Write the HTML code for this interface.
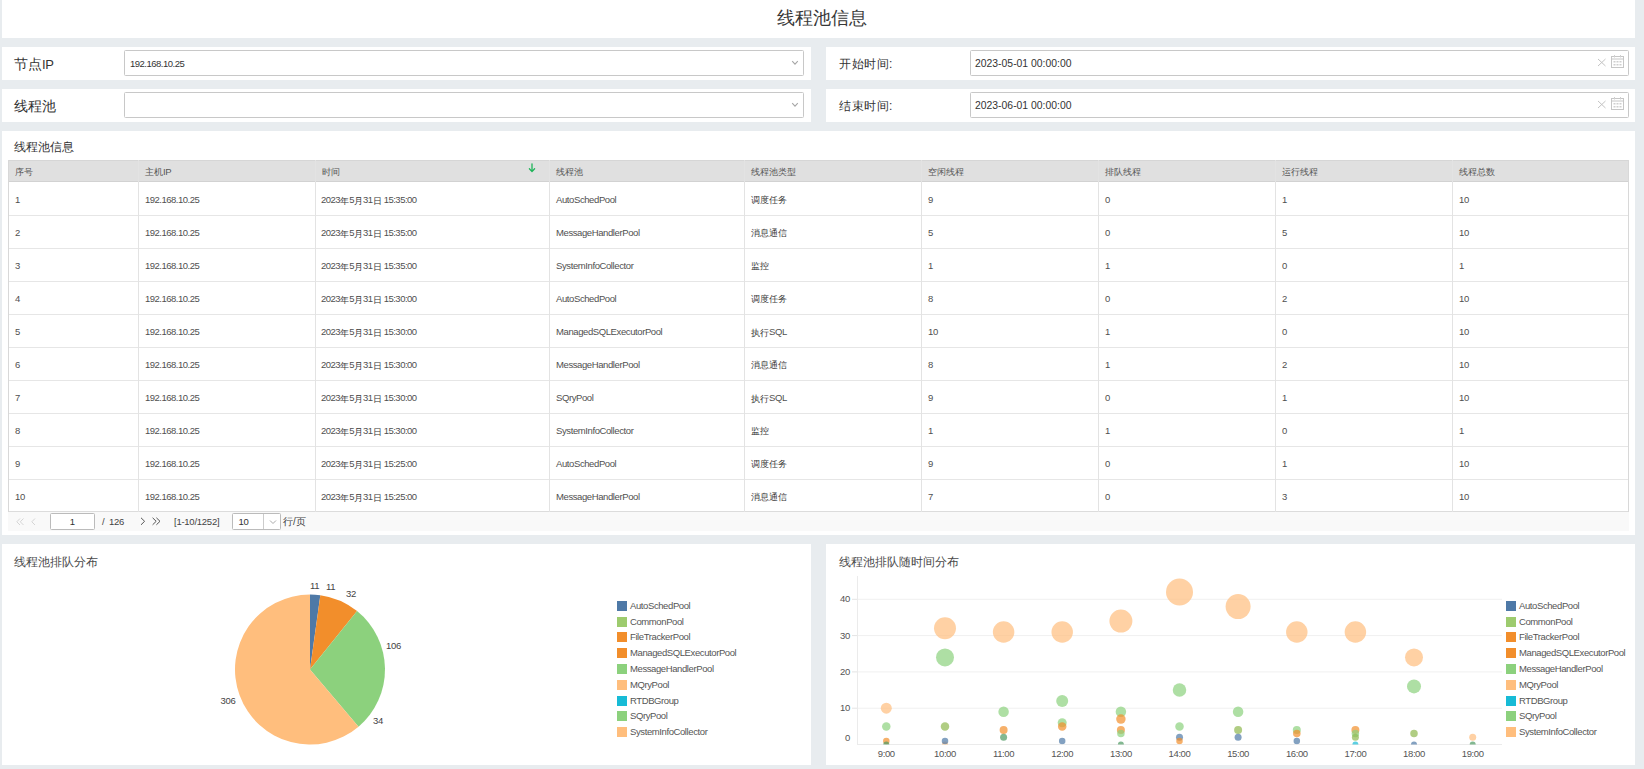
<!DOCTYPE html>
<html><head><meta charset="utf-8"><title>线程池信息</title>
<style>
*{box-sizing:border-box}
html,body{margin:0;padding:0}
body{width:1644px;height:769px;background:#e8ecef;position:relative;overflow:hidden;font-family:"Liberation Sans",sans-serif;color:#333}
.a{position:absolute;white-space:nowrap}
.p{position:absolute;background:#fff}
.lbl{position:absolute;font-size:14px;line-height:16px;color:#333;white-space:nowrap}
.inp{position:absolute;border:1px solid #c8c8c8;border-radius:1.5px;background:#fff}
.inp span.v{position:absolute;left:4px;top:0;line-height:24px;font-size:10px;color:#333;white-space:nowrap}
.th,.td{position:absolute;white-space:nowrap;padding-left:7px;font-size:9px;color:#505050}
.th{top:162px;height:20px;line-height:20px;color:#555}
.td{height:33px;line-height:35px}
.hl{position:absolute;height:1px}
.vl{position:absolute;width:1px}
.leg{position:absolute;font-size:10px;color:#555;white-space:nowrap;line-height:12px}
</style></head><body>

<div class="p" style="left:2px;top:0;width:1633px;height:38px"></div>
<div class="a" style="left:0;top:7px;width:1644px;text-align:center;font-size:18px;line-height:22px;color:#383838">线程池信息</div>
<div class="p" style="left:2px;top:47px;width:809px;height:33px"></div>
<div class="p" style="left:826px;top:47px;width:809px;height:33px"></div>
<div class="lbl" style="left:14px;top:56px">节点<span style="font-size:13px;letter-spacing:-0.3px">IP</span></div>
<div class="lbl" style="left:839px;top:56px;font-size:12px;letter-spacing:0.5px">开始时间:</div>
<div class="inp" style="left:124px;top:50px;width:680px;height:26px"><span class="v" style="left:5px;top:1px;font-size:9.5px;letter-spacing:-0.5px">192.168.10.25</span><svg class="a" style="left:666px;top:9px" width="8" height="6" viewBox="0 0 8 6"><path d="M1.2 1.2 L4 4.1 L6.8 1.2" fill="none" stroke="#a6a6a6" stroke-width="1.1"/></svg></div>
<div class="inp" style="left:970px;top:50px;width:659px;height:26px"><span class="v" style="font-size:10.4px;letter-spacing:0px;top:1px">2023-05-01 00:00:00</span><svg class="a" style="left:626px;top:7px" width="10" height="9" viewBox="0 0 10 9"><path d="M1 1 L8.5 8 M8.5 1 L1 8" stroke="#c4c4c4" stroke-width="1" fill="none"/></svg><svg class="a" style="left:640px;top:4px" width="14" height="14" viewBox="0 0 14 14"><rect x="0.5" y="1.5" width="12" height="11" fill="none" stroke="#c6c6c6"/><line x1="0.5" x2="12.5" y1="4" y2="4" stroke="#c6c6c6" stroke-width="1"/><line x1="3.5" x2="3.5" y1="0" y2="2.5" stroke="#d0d0d0"/><line x1="9.5" x2="9.5" y1="0" y2="2.5" stroke="#d0d0d0"/><rect x="2.5" y="6" width="2" height="1.5" fill="#cfcfcf"/><rect x="2.5" y="9" width="2" height="1.5" fill="#cfcfcf"/><rect x="5.5" y="6" width="2" height="1.5" fill="#cfcfcf"/><rect x="5.5" y="9" width="2" height="1.5" fill="#cfcfcf"/><rect x="8.5" y="6" width="2" height="1.5" fill="#cfcfcf"/><rect x="8.5" y="9" width="2" height="1.5" fill="#cfcfcf"/></svg></div>
<div class="p" style="left:2px;top:89px;width:809px;height:33px"></div>
<div class="p" style="left:826px;top:89px;width:809px;height:33px"></div>
<div class="lbl" style="left:14px;top:98px">线程池</div>
<div class="lbl" style="left:839px;top:98px;font-size:12px;letter-spacing:0.5px">结束时间:</div>
<div class="inp" style="left:124px;top:92px;width:680px;height:26px"><span class="v" style="left:5px;top:1px;font-size:9.5px;letter-spacing:-0.5px"></span><svg class="a" style="left:666px;top:9px" width="8" height="6" viewBox="0 0 8 6"><path d="M1.2 1.2 L4 4.1 L6.8 1.2" fill="none" stroke="#a6a6a6" stroke-width="1.1"/></svg></div>
<div class="inp" style="left:970px;top:92px;width:659px;height:26px"><span class="v" style="font-size:10.4px;letter-spacing:0px;top:1px">2023-06-01 00:00:00</span><svg class="a" style="left:626px;top:7px" width="10" height="9" viewBox="0 0 10 9"><path d="M1 1 L8.5 8 M8.5 1 L1 8" stroke="#c4c4c4" stroke-width="1" fill="none"/></svg><svg class="a" style="left:640px;top:4px" width="14" height="14" viewBox="0 0 14 14"><rect x="0.5" y="1.5" width="12" height="11" fill="none" stroke="#c6c6c6"/><line x1="0.5" x2="12.5" y1="4" y2="4" stroke="#c6c6c6" stroke-width="1"/><line x1="3.5" x2="3.5" y1="0" y2="2.5" stroke="#d0d0d0"/><line x1="9.5" x2="9.5" y1="0" y2="2.5" stroke="#d0d0d0"/><rect x="2.5" y="6" width="2" height="1.5" fill="#cfcfcf"/><rect x="2.5" y="9" width="2" height="1.5" fill="#cfcfcf"/><rect x="5.5" y="6" width="2" height="1.5" fill="#cfcfcf"/><rect x="5.5" y="9" width="2" height="1.5" fill="#cfcfcf"/><rect x="8.5" y="6" width="2" height="1.5" fill="#cfcfcf"/><rect x="8.5" y="9" width="2" height="1.5" fill="#cfcfcf"/></svg></div>
<div class="p" style="left:2px;top:131px;width:1633px;height:404px"></div>
<div class="a" style="left:14px;top:140px;font-size:12px;line-height:15px;color:#333">线程池信息</div>
<div class="a" style="left:8px;top:160px;width:1621px;height:22px;background:#e0e0e0"></div>
<div class="hl" style="left:8px;top:160px;width:1621px;background:#d6d6d6"></div>
<div class="hl" style="left:8px;top:181px;width:1621px;background:#d2d2d2"></div>
<div class="hl" style="left:8px;top:215px;width:1621px;background:#e6e6e6"></div>
<div class="hl" style="left:8px;top:248px;width:1621px;background:#e6e6e6"></div>
<div class="hl" style="left:8px;top:281px;width:1621px;background:#e6e6e6"></div>
<div class="hl" style="left:8px;top:314px;width:1621px;background:#e6e6e6"></div>
<div class="hl" style="left:8px;top:347px;width:1621px;background:#e6e6e6"></div>
<div class="hl" style="left:8px;top:380px;width:1621px;background:#e6e6e6"></div>
<div class="hl" style="left:8px;top:413px;width:1621px;background:#e6e6e6"></div>
<div class="hl" style="left:8px;top:446px;width:1621px;background:#e6e6e6"></div>
<div class="hl" style="left:8px;top:479px;width:1621px;background:#e6e6e6"></div>
<div class="hl" style="left:8px;top:511px;width:1621px;background:#dcdcdc"></div>
<div class="vl" style="left:8px;top:160px;height:352px;background:#d8d8d8"></div>
<div class="vl" style="left:138px;top:160px;height:352px;background:#e3e3e3"></div>
<div class="vl" style="left:315px;top:160px;height:352px;background:#e3e3e3"></div>
<div class="vl" style="left:549px;top:160px;height:352px;background:#e3e3e3"></div>
<div class="vl" style="left:744px;top:160px;height:352px;background:#e3e3e3"></div>
<div class="vl" style="left:921px;top:160px;height:352px;background:#e3e3e3"></div>
<div class="vl" style="left:1098px;top:160px;height:352px;background:#e3e3e3"></div>
<div class="vl" style="left:1275px;top:160px;height:352px;background:#e3e3e3"></div>
<div class="vl" style="left:1452px;top:160px;height:352px;background:#e3e3e3"></div>
<div class="vl" style="left:1628px;top:160px;height:352px;background:#d8d8d8"></div>
<div class="th" style="left:8px;width:130px">序号</div>
<div class="th" style="left:138px;width:177px">主机<span style="font-size:9.5px;letter-spacing:-0.3px">IP</span></div>
<div class="th" style="left:315px;width:234px">时间</div>
<div class="th" style="left:549px;width:195px">线程池</div>
<div class="th" style="left:744px;width:177px">线程池类型</div>
<div class="th" style="left:921px;width:177px">空闲线程</div>
<div class="th" style="left:1098px;width:177px">排队线程</div>
<div class="th" style="left:1275px;width:177px">运行线程</div>
<div class="th" style="left:1452px;width:176px">线程总数</div>
<svg class="a" style="left:527.5px;top:163px" width="8" height="10" viewBox="0 0 8 10"><path d="M4 0.8 V8.5 M1.4 5.8 L4 8.6 L6.6 5.8" stroke="#1fb45a" stroke-width="1.3" fill="none" stroke-linecap="round"/></svg>
<div class="td" style="left:8px;top:182px;width:130px"><span style="font-size:9.5px;letter-spacing:-0.4px">1</span></div>
<div class="td" style="left:138px;top:182px;width:177px"><span style="font-size:9.5px;letter-spacing:-0.5px">192.168.10.25</span></div>
<div class="td" style="padding-left:6px;left:315px;top:182px;width:234px"><span style="font-size:9.5px;letter-spacing:-0.5px">2023</span><span style="position:relative;top:1px;color:#383838">年</span><span style="font-size:9.5px;letter-spacing:-0.5px">5</span><span style="position:relative;top:1px;color:#383838">月</span><span style="font-size:9.5px;letter-spacing:-0.5px">31</span><span style="position:relative;top:1px;color:#383838">日</span><span style="font-size:9.5px;letter-spacing:-0.5px"> 15:35:00</span></div>
<div class="td" style="left:549px;top:182px;width:195px"><span style="font-size:9.5px;letter-spacing:-0.4px">AutoSchedPool</span></div>
<div class="td" style="left:744px;top:182px;width:177px"><span style="position:relative;top:1px;color:#383838">调度任务</span></div>
<div class="td" style="left:921px;top:182px;width:177px"><span style="font-size:9.5px;letter-spacing:-0.4px">9</span></div>
<div class="td" style="left:1098px;top:182px;width:177px"><span style="font-size:9.5px;letter-spacing:-0.4px">0</span></div>
<div class="td" style="left:1275px;top:182px;width:177px"><span style="font-size:9.5px;letter-spacing:-0.4px">1</span></div>
<div class="td" style="left:1452px;top:182px;width:176px"><span style="font-size:9.5px;letter-spacing:-0.4px">10</span></div>
<div class="td" style="left:8px;top:215px;width:130px"><span style="font-size:9.5px;letter-spacing:-0.4px">2</span></div>
<div class="td" style="left:138px;top:215px;width:177px"><span style="font-size:9.5px;letter-spacing:-0.5px">192.168.10.25</span></div>
<div class="td" style="padding-left:6px;left:315px;top:215px;width:234px"><span style="font-size:9.5px;letter-spacing:-0.5px">2023</span><span style="position:relative;top:1px;color:#383838">年</span><span style="font-size:9.5px;letter-spacing:-0.5px">5</span><span style="position:relative;top:1px;color:#383838">月</span><span style="font-size:9.5px;letter-spacing:-0.5px">31</span><span style="position:relative;top:1px;color:#383838">日</span><span style="font-size:9.5px;letter-spacing:-0.5px"> 15:35:00</span></div>
<div class="td" style="left:549px;top:215px;width:195px"><span style="font-size:9.5px;letter-spacing:-0.4px">MessageHandlerPool</span></div>
<div class="td" style="left:744px;top:215px;width:177px"><span style="position:relative;top:1px;color:#383838">消息通信</span></div>
<div class="td" style="left:921px;top:215px;width:177px"><span style="font-size:9.5px;letter-spacing:-0.4px">5</span></div>
<div class="td" style="left:1098px;top:215px;width:177px"><span style="font-size:9.5px;letter-spacing:-0.4px">0</span></div>
<div class="td" style="left:1275px;top:215px;width:177px"><span style="font-size:9.5px;letter-spacing:-0.4px">5</span></div>
<div class="td" style="left:1452px;top:215px;width:176px"><span style="font-size:9.5px;letter-spacing:-0.4px">10</span></div>
<div class="td" style="left:8px;top:248px;width:130px"><span style="font-size:9.5px;letter-spacing:-0.4px">3</span></div>
<div class="td" style="left:138px;top:248px;width:177px"><span style="font-size:9.5px;letter-spacing:-0.5px">192.168.10.25</span></div>
<div class="td" style="padding-left:6px;left:315px;top:248px;width:234px"><span style="font-size:9.5px;letter-spacing:-0.5px">2023</span><span style="position:relative;top:1px;color:#383838">年</span><span style="font-size:9.5px;letter-spacing:-0.5px">5</span><span style="position:relative;top:1px;color:#383838">月</span><span style="font-size:9.5px;letter-spacing:-0.5px">31</span><span style="position:relative;top:1px;color:#383838">日</span><span style="font-size:9.5px;letter-spacing:-0.5px"> 15:35:00</span></div>
<div class="td" style="left:549px;top:248px;width:195px"><span style="font-size:9.5px;letter-spacing:-0.4px">SystemInfoCollector</span></div>
<div class="td" style="left:744px;top:248px;width:177px"><span style="position:relative;top:1px;color:#383838">监控</span></div>
<div class="td" style="left:921px;top:248px;width:177px"><span style="font-size:9.5px;letter-spacing:-0.4px">1</span></div>
<div class="td" style="left:1098px;top:248px;width:177px"><span style="font-size:9.5px;letter-spacing:-0.4px">1</span></div>
<div class="td" style="left:1275px;top:248px;width:177px"><span style="font-size:9.5px;letter-spacing:-0.4px">0</span></div>
<div class="td" style="left:1452px;top:248px;width:176px"><span style="font-size:9.5px;letter-spacing:-0.4px">1</span></div>
<div class="td" style="left:8px;top:281px;width:130px"><span style="font-size:9.5px;letter-spacing:-0.4px">4</span></div>
<div class="td" style="left:138px;top:281px;width:177px"><span style="font-size:9.5px;letter-spacing:-0.5px">192.168.10.25</span></div>
<div class="td" style="padding-left:6px;left:315px;top:281px;width:234px"><span style="font-size:9.5px;letter-spacing:-0.5px">2023</span><span style="position:relative;top:1px;color:#383838">年</span><span style="font-size:9.5px;letter-spacing:-0.5px">5</span><span style="position:relative;top:1px;color:#383838">月</span><span style="font-size:9.5px;letter-spacing:-0.5px">31</span><span style="position:relative;top:1px;color:#383838">日</span><span style="font-size:9.5px;letter-spacing:-0.5px"> 15:30:00</span></div>
<div class="td" style="left:549px;top:281px;width:195px"><span style="font-size:9.5px;letter-spacing:-0.4px">AutoSchedPool</span></div>
<div class="td" style="left:744px;top:281px;width:177px"><span style="position:relative;top:1px;color:#383838">调度任务</span></div>
<div class="td" style="left:921px;top:281px;width:177px"><span style="font-size:9.5px;letter-spacing:-0.4px">8</span></div>
<div class="td" style="left:1098px;top:281px;width:177px"><span style="font-size:9.5px;letter-spacing:-0.4px">0</span></div>
<div class="td" style="left:1275px;top:281px;width:177px"><span style="font-size:9.5px;letter-spacing:-0.4px">2</span></div>
<div class="td" style="left:1452px;top:281px;width:176px"><span style="font-size:9.5px;letter-spacing:-0.4px">10</span></div>
<div class="td" style="left:8px;top:314px;width:130px"><span style="font-size:9.5px;letter-spacing:-0.4px">5</span></div>
<div class="td" style="left:138px;top:314px;width:177px"><span style="font-size:9.5px;letter-spacing:-0.5px">192.168.10.25</span></div>
<div class="td" style="padding-left:6px;left:315px;top:314px;width:234px"><span style="font-size:9.5px;letter-spacing:-0.5px">2023</span><span style="position:relative;top:1px;color:#383838">年</span><span style="font-size:9.5px;letter-spacing:-0.5px">5</span><span style="position:relative;top:1px;color:#383838">月</span><span style="font-size:9.5px;letter-spacing:-0.5px">31</span><span style="position:relative;top:1px;color:#383838">日</span><span style="font-size:9.5px;letter-spacing:-0.5px"> 15:30:00</span></div>
<div class="td" style="left:549px;top:314px;width:195px"><span style="font-size:9.5px;letter-spacing:-0.4px">ManagedSQLExecutorPool</span></div>
<div class="td" style="left:744px;top:314px;width:177px"><span style="position:relative;top:1px;color:#383838">执行</span><span style="font-size:9.5px;letter-spacing:-0.4px">SQL</span></div>
<div class="td" style="left:921px;top:314px;width:177px"><span style="font-size:9.5px;letter-spacing:-0.4px">10</span></div>
<div class="td" style="left:1098px;top:314px;width:177px"><span style="font-size:9.5px;letter-spacing:-0.4px">1</span></div>
<div class="td" style="left:1275px;top:314px;width:177px"><span style="font-size:9.5px;letter-spacing:-0.4px">0</span></div>
<div class="td" style="left:1452px;top:314px;width:176px"><span style="font-size:9.5px;letter-spacing:-0.4px">10</span></div>
<div class="td" style="left:8px;top:347px;width:130px"><span style="font-size:9.5px;letter-spacing:-0.4px">6</span></div>
<div class="td" style="left:138px;top:347px;width:177px"><span style="font-size:9.5px;letter-spacing:-0.5px">192.168.10.25</span></div>
<div class="td" style="padding-left:6px;left:315px;top:347px;width:234px"><span style="font-size:9.5px;letter-spacing:-0.5px">2023</span><span style="position:relative;top:1px;color:#383838">年</span><span style="font-size:9.5px;letter-spacing:-0.5px">5</span><span style="position:relative;top:1px;color:#383838">月</span><span style="font-size:9.5px;letter-spacing:-0.5px">31</span><span style="position:relative;top:1px;color:#383838">日</span><span style="font-size:9.5px;letter-spacing:-0.5px"> 15:30:00</span></div>
<div class="td" style="left:549px;top:347px;width:195px"><span style="font-size:9.5px;letter-spacing:-0.4px">MessageHandlerPool</span></div>
<div class="td" style="left:744px;top:347px;width:177px"><span style="position:relative;top:1px;color:#383838">消息通信</span></div>
<div class="td" style="left:921px;top:347px;width:177px"><span style="font-size:9.5px;letter-spacing:-0.4px">8</span></div>
<div class="td" style="left:1098px;top:347px;width:177px"><span style="font-size:9.5px;letter-spacing:-0.4px">1</span></div>
<div class="td" style="left:1275px;top:347px;width:177px"><span style="font-size:9.5px;letter-spacing:-0.4px">2</span></div>
<div class="td" style="left:1452px;top:347px;width:176px"><span style="font-size:9.5px;letter-spacing:-0.4px">10</span></div>
<div class="td" style="left:8px;top:380px;width:130px"><span style="font-size:9.5px;letter-spacing:-0.4px">7</span></div>
<div class="td" style="left:138px;top:380px;width:177px"><span style="font-size:9.5px;letter-spacing:-0.5px">192.168.10.25</span></div>
<div class="td" style="padding-left:6px;left:315px;top:380px;width:234px"><span style="font-size:9.5px;letter-spacing:-0.5px">2023</span><span style="position:relative;top:1px;color:#383838">年</span><span style="font-size:9.5px;letter-spacing:-0.5px">5</span><span style="position:relative;top:1px;color:#383838">月</span><span style="font-size:9.5px;letter-spacing:-0.5px">31</span><span style="position:relative;top:1px;color:#383838">日</span><span style="font-size:9.5px;letter-spacing:-0.5px"> 15:30:00</span></div>
<div class="td" style="left:549px;top:380px;width:195px"><span style="font-size:9.5px;letter-spacing:-0.4px">SQryPool</span></div>
<div class="td" style="left:744px;top:380px;width:177px"><span style="position:relative;top:1px;color:#383838">执行</span><span style="font-size:9.5px;letter-spacing:-0.4px">SQL</span></div>
<div class="td" style="left:921px;top:380px;width:177px"><span style="font-size:9.5px;letter-spacing:-0.4px">9</span></div>
<div class="td" style="left:1098px;top:380px;width:177px"><span style="font-size:9.5px;letter-spacing:-0.4px">0</span></div>
<div class="td" style="left:1275px;top:380px;width:177px"><span style="font-size:9.5px;letter-spacing:-0.4px">1</span></div>
<div class="td" style="left:1452px;top:380px;width:176px"><span style="font-size:9.5px;letter-spacing:-0.4px">10</span></div>
<div class="td" style="left:8px;top:413px;width:130px"><span style="font-size:9.5px;letter-spacing:-0.4px">8</span></div>
<div class="td" style="left:138px;top:413px;width:177px"><span style="font-size:9.5px;letter-spacing:-0.5px">192.168.10.25</span></div>
<div class="td" style="padding-left:6px;left:315px;top:413px;width:234px"><span style="font-size:9.5px;letter-spacing:-0.5px">2023</span><span style="position:relative;top:1px;color:#383838">年</span><span style="font-size:9.5px;letter-spacing:-0.5px">5</span><span style="position:relative;top:1px;color:#383838">月</span><span style="font-size:9.5px;letter-spacing:-0.5px">31</span><span style="position:relative;top:1px;color:#383838">日</span><span style="font-size:9.5px;letter-spacing:-0.5px"> 15:30:00</span></div>
<div class="td" style="left:549px;top:413px;width:195px"><span style="font-size:9.5px;letter-spacing:-0.4px">SystemInfoCollector</span></div>
<div class="td" style="left:744px;top:413px;width:177px"><span style="position:relative;top:1px;color:#383838">监控</span></div>
<div class="td" style="left:921px;top:413px;width:177px"><span style="font-size:9.5px;letter-spacing:-0.4px">1</span></div>
<div class="td" style="left:1098px;top:413px;width:177px"><span style="font-size:9.5px;letter-spacing:-0.4px">1</span></div>
<div class="td" style="left:1275px;top:413px;width:177px"><span style="font-size:9.5px;letter-spacing:-0.4px">0</span></div>
<div class="td" style="left:1452px;top:413px;width:176px"><span style="font-size:9.5px;letter-spacing:-0.4px">1</span></div>
<div class="td" style="left:8px;top:446px;width:130px"><span style="font-size:9.5px;letter-spacing:-0.4px">9</span></div>
<div class="td" style="left:138px;top:446px;width:177px"><span style="font-size:9.5px;letter-spacing:-0.5px">192.168.10.25</span></div>
<div class="td" style="padding-left:6px;left:315px;top:446px;width:234px"><span style="font-size:9.5px;letter-spacing:-0.5px">2023</span><span style="position:relative;top:1px;color:#383838">年</span><span style="font-size:9.5px;letter-spacing:-0.5px">5</span><span style="position:relative;top:1px;color:#383838">月</span><span style="font-size:9.5px;letter-spacing:-0.5px">31</span><span style="position:relative;top:1px;color:#383838">日</span><span style="font-size:9.5px;letter-spacing:-0.5px"> 15:25:00</span></div>
<div class="td" style="left:549px;top:446px;width:195px"><span style="font-size:9.5px;letter-spacing:-0.4px">AutoSchedPool</span></div>
<div class="td" style="left:744px;top:446px;width:177px"><span style="position:relative;top:1px;color:#383838">调度任务</span></div>
<div class="td" style="left:921px;top:446px;width:177px"><span style="font-size:9.5px;letter-spacing:-0.4px">9</span></div>
<div class="td" style="left:1098px;top:446px;width:177px"><span style="font-size:9.5px;letter-spacing:-0.4px">0</span></div>
<div class="td" style="left:1275px;top:446px;width:177px"><span style="font-size:9.5px;letter-spacing:-0.4px">1</span></div>
<div class="td" style="left:1452px;top:446px;width:176px"><span style="font-size:9.5px;letter-spacing:-0.4px">10</span></div>
<div class="td" style="left:8px;top:479px;width:130px"><span style="font-size:9.5px;letter-spacing:-0.4px">10</span></div>
<div class="td" style="left:138px;top:479px;width:177px"><span style="font-size:9.5px;letter-spacing:-0.5px">192.168.10.25</span></div>
<div class="td" style="padding-left:6px;left:315px;top:479px;width:234px"><span style="font-size:9.5px;letter-spacing:-0.5px">2023</span><span style="position:relative;top:1px;color:#383838">年</span><span style="font-size:9.5px;letter-spacing:-0.5px">5</span><span style="position:relative;top:1px;color:#383838">月</span><span style="font-size:9.5px;letter-spacing:-0.5px">31</span><span style="position:relative;top:1px;color:#383838">日</span><span style="font-size:9.5px;letter-spacing:-0.5px"> 15:25:00</span></div>
<div class="td" style="left:549px;top:479px;width:195px"><span style="font-size:9.5px;letter-spacing:-0.4px">MessageHandlerPool</span></div>
<div class="td" style="left:744px;top:479px;width:177px"><span style="position:relative;top:1px;color:#383838">消息通信</span></div>
<div class="td" style="left:921px;top:479px;width:177px"><span style="font-size:9.5px;letter-spacing:-0.4px">7</span></div>
<div class="td" style="left:1098px;top:479px;width:177px"><span style="font-size:9.5px;letter-spacing:-0.4px">0</span></div>
<div class="td" style="left:1275px;top:479px;width:177px"><span style="font-size:9.5px;letter-spacing:-0.4px">3</span></div>
<div class="td" style="left:1452px;top:479px;width:176px"><span style="font-size:9.5px;letter-spacing:-0.4px">10</span></div>
<div class="a" style="left:8px;top:512px;width:1621px;height:19px;background:#f9f9f9"></div>
<svg class="a" style="left:0;top:508px" width="320" height="24" viewBox="0 508 320 24"><path d="M20 518.5 L16.8 521.8 L20 525 M23.5 518.5 L20.3 521.8 L23.5 525" fill="none" stroke="#d0d0d0" stroke-width="0.9"/><path d="M35 518.5 L31.8 521.8 L35 525" fill="none" stroke="#d0d0d0" stroke-width="0.9"/><path d="M141 517.8 L144.6 521.3 L141 524.8" fill="none" stroke="#555" stroke-width="1"/><path d="M152.6 517.8 L156.2 521.3 L152.6 524.8 M156.4 517.8 L160 521.3 L156.4 524.8" fill="none" stroke="#555" stroke-width="1"/></svg>
<div class="inp" style="left:50px;top:513px;width:45px;height:17px;border-color:#bbb"><span class="v" style="left:0;width:43px;text-align:center;line-height:16px;font-size:9.5px">1</span></div>
<div class="a" style="left:102px;top:515px;font-size:9.5px;line-height:14px;color:#444;letter-spacing:-0.3px">/&nbsp;&nbsp;126</div>
<div class="a" style="left:174px;top:515px;font-size:9.5px;line-height:14px;color:#444;letter-spacing:-0.25px">[1-10/1252]</div>
<div class="inp" style="left:232px;top:513px;width:49px;height:17px;border-color:#bbb"><span class="v" style="left:5.5px;line-height:15px;font-size:9.5px;letter-spacing:-0.3px">10</span><div class="vl" style="left:30px;top:0;height:15px;background:#ccc"></div><svg class="a" style="left:36px;top:5px" width="8" height="6" viewBox="0 0 8 6"><path d="M1 1.5 L4 4.5 L7 1.5" fill="none" stroke="#aaa" stroke-width="1"/></svg></div>
<div class="a" style="left:283px;top:515px;font-size:10px;line-height:14px;color:#444">行/页</div>
<div class="p" style="left:2px;top:544px;width:809px;height:221px"></div>
<div class="p" style="left:826px;top:544px;width:809px;height:221px"></div>
<div class="a" style="left:14px;top:554.5px;font-size:12px;line-height:15px;color:#4a4a4a">线程池排队分布</div>
<div class="a" style="left:839px;top:554.5px;font-size:12px;line-height:15px;color:#4a4a4a">线程池排队随时间分布</div>
<div class="a" style="left:617px;top:601.00px;width:10px;height:10px;background:#4e79a7"></div>
<div class="leg" style="left:630px;top:600.00px;font-size:9.5px;letter-spacing:-0.4px">AutoSchedPool</div>
<div class="a" style="left:617px;top:617.00px;width:10px;height:10px;background:#9dcb6e"></div>
<div class="leg" style="left:630px;top:616.00px;font-size:9.5px;letter-spacing:-0.4px">CommonPool</div>
<div class="a" style="left:617px;top:632.00px;width:10px;height:10px;background:#f28e2b"></div>
<div class="leg" style="left:630px;top:631.00px;font-size:9.5px;letter-spacing:-0.4px">FileTrackerPool</div>
<div class="a" style="left:617px;top:648.00px;width:10px;height:10px;background:#f28e2b"></div>
<div class="leg" style="left:630px;top:647.00px;font-size:9.5px;letter-spacing:-0.4px">ManagedSQLExecutorPool</div>
<div class="a" style="left:617px;top:664.00px;width:10px;height:10px;background:#8cd17d"></div>
<div class="leg" style="left:630px;top:663.00px;font-size:9.5px;letter-spacing:-0.4px">MessageHandlerPool</div>
<div class="a" style="left:617px;top:680.00px;width:10px;height:10px;background:#ffbe7d"></div>
<div class="leg" style="left:630px;top:679.00px;font-size:9.5px;letter-spacing:-0.4px">MQryPool</div>
<div class="a" style="left:617px;top:696.00px;width:10px;height:10px;background:#17bbd6"></div>
<div class="leg" style="left:630px;top:695.00px;font-size:9.5px;letter-spacing:-0.4px">RTDBGroup</div>
<div class="a" style="left:617px;top:711.00px;width:10px;height:10px;background:#8cd17d"></div>
<div class="leg" style="left:630px;top:710.00px;font-size:9.5px;letter-spacing:-0.4px">SQryPool</div>
<div class="a" style="left:617px;top:727.00px;width:10px;height:10px;background:#ffbe7d"></div>
<div class="leg" style="left:630px;top:726.00px;font-size:9.5px;letter-spacing:-0.4px">SystemInfoCollector</div>
<div class="a" style="left:1506px;top:601.00px;width:10px;height:10px;background:#4e79a7"></div>
<div class="leg" style="left:1519px;top:600.00px;font-size:9.5px;letter-spacing:-0.4px">AutoSchedPool</div>
<div class="a" style="left:1506px;top:617.00px;width:10px;height:10px;background:#9dcb6e"></div>
<div class="leg" style="left:1519px;top:616.00px;font-size:9.5px;letter-spacing:-0.4px">CommonPool</div>
<div class="a" style="left:1506px;top:632.00px;width:10px;height:10px;background:#f28e2b"></div>
<div class="leg" style="left:1519px;top:631.00px;font-size:9.5px;letter-spacing:-0.4px">FileTrackerPool</div>
<div class="a" style="left:1506px;top:648.00px;width:10px;height:10px;background:#f28e2b"></div>
<div class="leg" style="left:1519px;top:647.00px;font-size:9.5px;letter-spacing:-0.4px">ManagedSQLExecutorPool</div>
<div class="a" style="left:1506px;top:664.00px;width:10px;height:10px;background:#8cd17d"></div>
<div class="leg" style="left:1519px;top:663.00px;font-size:9.5px;letter-spacing:-0.4px">MessageHandlerPool</div>
<div class="a" style="left:1506px;top:680.00px;width:10px;height:10px;background:#ffbe7d"></div>
<div class="leg" style="left:1519px;top:679.00px;font-size:9.5px;letter-spacing:-0.4px">MQryPool</div>
<div class="a" style="left:1506px;top:696.00px;width:10px;height:10px;background:#17bbd6"></div>
<div class="leg" style="left:1519px;top:695.00px;font-size:9.5px;letter-spacing:-0.4px">RTDBGroup</div>
<div class="a" style="left:1506px;top:711.00px;width:10px;height:10px;background:#8cd17d"></div>
<div class="leg" style="left:1519px;top:710.00px;font-size:9.5px;letter-spacing:-0.4px">SQryPool</div>
<div class="a" style="left:1506px;top:727.00px;width:10px;height:10px;background:#ffbe7d"></div>
<div class="leg" style="left:1519px;top:726.00px;font-size:9.5px;letter-spacing:-0.4px">SystemInfoCollector</div>
<svg class="a" style="left:0;top:0" width="811" height="769"><path d="M310 669.5 L310.00 594.50 A75 75 0 0 1 320.33 595.22 Z" fill="#4e79a7"/><path d="M310 669.5 L320.33 595.22 A75 75 0 0 1 357.08 611.12 Z" fill="#f28e2b"/><path d="M310 669.5 L357.08 611.12 A75 75 0 0 1 358.53 726.68 Z" fill="#8cd17d"/><path d="M310 669.5 L358.53 726.68 A75 75 0 1 1 310.00 594.50 Z" fill="#ffbe7d"/></svg>
<div class="a" style="left:310px;top:581px;font-size:9.5px;line-height:10px;color:#444;letter-spacing:-0.3px">11</div>
<div class="a" style="left:326px;top:582px;font-size:9.5px;line-height:10px;color:#444;letter-spacing:-0.3px">11</div>
<div class="a" style="left:346px;top:589px;font-size:9.5px;line-height:10px;color:#444;letter-spacing:-0.3px">32</div>
<div class="a" style="left:386px;top:641px;font-size:9.5px;line-height:10px;color:#444;letter-spacing:-0.3px">106</div>
<div class="a" style="left:373px;top:716px;font-size:9.5px;line-height:10px;color:#444;letter-spacing:-0.3px">34</div>
<div class="a" style="left:220.5px;top:696px;font-size:9.5px;line-height:10px;color:#444;letter-spacing:-0.3px">306</div>
<svg class="a" style="left:0;top:0" width="1644" height="769"><defs><clipPath id="cp"><rect x="857" y="560" width="646" height="184.5"/></clipPath></defs><line x1="857" x2="1502" y1="708.2" y2="708.2" stroke="#f0f0f0" stroke-width="1"/><line x1="852" x2="857" y1="708.2" y2="708.2" stroke="#e4e4e4" stroke-width="1"/><line x1="857" x2="1502" y1="671.9" y2="671.9" stroke="#f0f0f0" stroke-width="1"/><line x1="852" x2="857" y1="671.9" y2="671.9" stroke="#e4e4e4" stroke-width="1"/><line x1="857" x2="1502" y1="635.6" y2="635.6" stroke="#f0f0f0" stroke-width="1"/><line x1="852" x2="857" y1="635.6" y2="635.6" stroke="#e4e4e4" stroke-width="1"/><line x1="857" x2="1502" y1="599.3" y2="599.3" stroke="#f0f0f0" stroke-width="1"/><line x1="852" x2="857" y1="599.3" y2="599.3" stroke="#e4e4e4" stroke-width="1"/><line x1="857" x2="1502" y1="744.5" y2="744.5" stroke="#ebebeb" stroke-width="1"/><line x1="857.5" x2="857.5" y1="576" y2="745" stroke="#ebebeb" stroke-width="1"/><g clip-path="url(#cp)"><circle cx="886.3" cy="708.2" r="5.50" fill="#ffbe7d" fill-opacity="0.7"/><circle cx="886.3" cy="726.4" r="4.25" fill="#8cd17d" fill-opacity="0.7"/><circle cx="886.3" cy="740.9" r="3.25" fill="#f28e2b" fill-opacity="0.7"/><circle cx="886.3" cy="744.5" r="3.00" fill="#4f9a62" fill-opacity="0.7"/><circle cx="945.0" cy="628.3" r="11.00" fill="#ffbe7d" fill-opacity="0.7"/><circle cx="945.0" cy="657.4" r="9.00" fill="#8cd17d" fill-opacity="0.7"/><circle cx="945.0" cy="726.4" r="4.25" fill="#8fb84f" fill-opacity="0.7"/><circle cx="945.0" cy="744.5" r="3.00" fill="#ffbe7d" fill-opacity="0.7"/><circle cx="945.0" cy="740.9" r="3.25" fill="#4e79a7" fill-opacity="0.7"/><circle cx="1003.6" cy="632.0" r="10.75" fill="#ffbe7d" fill-opacity="0.7"/><circle cx="1003.6" cy="711.8" r="5.25" fill="#8cd17d" fill-opacity="0.7"/><circle cx="1003.6" cy="730.0" r="4.00" fill="#f28e2b" fill-opacity="0.7"/><circle cx="1003.6" cy="737.2" r="3.50" fill="#4f9a62" fill-opacity="0.7"/><circle cx="1062.2" cy="632.0" r="10.75" fill="#ffbe7d" fill-opacity="0.7"/><circle cx="1062.2" cy="700.9" r="6.00" fill="#8cd17d" fill-opacity="0.7"/><circle cx="1062.2" cy="722.7" r="4.50" fill="#8cd17d" fill-opacity="0.7"/><circle cx="1062.2" cy="726.4" r="4.25" fill="#f28e2b" fill-opacity="0.7"/><circle cx="1062.2" cy="740.9" r="3.25" fill="#4e79a7" fill-opacity="0.7"/><circle cx="1120.9" cy="621.1" r="11.50" fill="#ffbe7d" fill-opacity="0.7"/><circle cx="1120.9" cy="711.8" r="5.25" fill="#8cd17d" fill-opacity="0.7"/><circle cx="1120.9" cy="719.1" r="4.75" fill="#f28e2b" fill-opacity="0.7"/><circle cx="1120.9" cy="730.0" r="4.00" fill="#f28e2b" fill-opacity="0.7"/><circle cx="1120.9" cy="733.6" r="3.75" fill="#8cd17d" fill-opacity="0.7"/><circle cx="1120.9" cy="744.5" r="3.00" fill="#4f9a62" fill-opacity="0.7"/><circle cx="1179.5" cy="592.0" r="13.50" fill="#ffbe7d" fill-opacity="0.7"/><circle cx="1179.5" cy="690.0" r="6.75" fill="#8cd17d" fill-opacity="0.7"/><circle cx="1179.5" cy="726.4" r="4.25" fill="#8cd17d" fill-opacity="0.7"/><circle cx="1179.5" cy="737.2" r="3.50" fill="#4e79a7" fill-opacity="0.7"/><circle cx="1179.5" cy="740.9" r="3.25" fill="#f28e2b" fill-opacity="0.7"/><circle cx="1238.1" cy="606.6" r="12.50" fill="#ffbe7d" fill-opacity="0.7"/><circle cx="1238.1" cy="711.8" r="5.25" fill="#8cd17d" fill-opacity="0.7"/><circle cx="1238.1" cy="730.0" r="4.00" fill="#8fb84f" fill-opacity="0.7"/><circle cx="1238.1" cy="737.2" r="3.50" fill="#4e79a7" fill-opacity="0.7"/><circle cx="1296.8" cy="632.0" r="10.75" fill="#ffbe7d" fill-opacity="0.7"/><circle cx="1296.8" cy="730.0" r="4.00" fill="#8cd17d" fill-opacity="0.7"/><circle cx="1296.8" cy="733.6" r="3.75" fill="#f28e2b" fill-opacity="0.7"/><circle cx="1296.8" cy="740.9" r="3.25" fill="#4e79a7" fill-opacity="0.7"/><circle cx="1355.4" cy="632.0" r="10.75" fill="#ffbe7d" fill-opacity="0.7"/><circle cx="1355.4" cy="730.0" r="4.00" fill="#f28e2b" fill-opacity="0.7"/><circle cx="1355.4" cy="733.6" r="3.75" fill="#8cd17d" fill-opacity="0.7"/><circle cx="1355.4" cy="737.2" r="3.50" fill="#8fb84f" fill-opacity="0.7"/><circle cx="1355.4" cy="744.5" r="3.00" fill="#17bbd6" fill-opacity="0.7"/><circle cx="1414.0" cy="657.4" r="9.00" fill="#ffbe7d" fill-opacity="0.7"/><circle cx="1414.0" cy="686.4" r="7.00" fill="#8cd17d" fill-opacity="0.7"/><circle cx="1414.0" cy="733.6" r="3.75" fill="#8fb84f" fill-opacity="0.7"/><circle cx="1414.0" cy="744.5" r="3.00" fill="#4e79a7" fill-opacity="0.7"/><circle cx="1472.7" cy="737.2" r="3.50" fill="#ffbe7d" fill-opacity="0.7"/><circle cx="1472.7" cy="744.5" r="3.00" fill="#4f9a62" fill-opacity="0.7"/></g></svg>
<div class="a" style="left:845px;top:731.5px;font-size:9.5px;line-height:12px;color:#555;letter-spacing:-0.3px">0</div>
<div class="a" style="left:840px;top:702.2px;font-size:9.5px;line-height:12px;color:#555;letter-spacing:-0.3px">10</div>
<div class="a" style="left:840px;top:665.9px;font-size:9.5px;line-height:12px;color:#555;letter-spacing:-0.3px">20</div>
<div class="a" style="left:840px;top:629.6px;font-size:9.5px;line-height:12px;color:#555;letter-spacing:-0.3px">30</div>
<div class="a" style="left:840px;top:593.3px;font-size:9.5px;line-height:12px;color:#555;letter-spacing:-0.3px">40</div>
<div class="a" style="left:856.3px;top:748px;width:60px;text-align:center;font-size:9.5px;line-height:12px;color:#555;letter-spacing:-0.4px">9:00</div>
<div class="a" style="left:915.0px;top:748px;width:60px;text-align:center;font-size:9.5px;line-height:12px;color:#555;letter-spacing:-0.4px">10:00</div>
<div class="a" style="left:973.6px;top:748px;width:60px;text-align:center;font-size:9.5px;line-height:12px;color:#555;letter-spacing:-0.4px">11:00</div>
<div class="a" style="left:1032.2px;top:748px;width:60px;text-align:center;font-size:9.5px;line-height:12px;color:#555;letter-spacing:-0.4px">12:00</div>
<div class="a" style="left:1090.9px;top:748px;width:60px;text-align:center;font-size:9.5px;line-height:12px;color:#555;letter-spacing:-0.4px">13:00</div>
<div class="a" style="left:1149.5px;top:748px;width:60px;text-align:center;font-size:9.5px;line-height:12px;color:#555;letter-spacing:-0.4px">14:00</div>
<div class="a" style="left:1208.1px;top:748px;width:60px;text-align:center;font-size:9.5px;line-height:12px;color:#555;letter-spacing:-0.4px">15:00</div>
<div class="a" style="left:1266.8px;top:748px;width:60px;text-align:center;font-size:9.5px;line-height:12px;color:#555;letter-spacing:-0.4px">16:00</div>
<div class="a" style="left:1325.4px;top:748px;width:60px;text-align:center;font-size:9.5px;line-height:12px;color:#555;letter-spacing:-0.4px">17:00</div>
<div class="a" style="left:1384.0px;top:748px;width:60px;text-align:center;font-size:9.5px;line-height:12px;color:#555;letter-spacing:-0.4px">18:00</div>
<div class="a" style="left:1442.7px;top:748px;width:60px;text-align:center;font-size:9.5px;line-height:12px;color:#555;letter-spacing:-0.4px">19:00</div>
</body></html>
